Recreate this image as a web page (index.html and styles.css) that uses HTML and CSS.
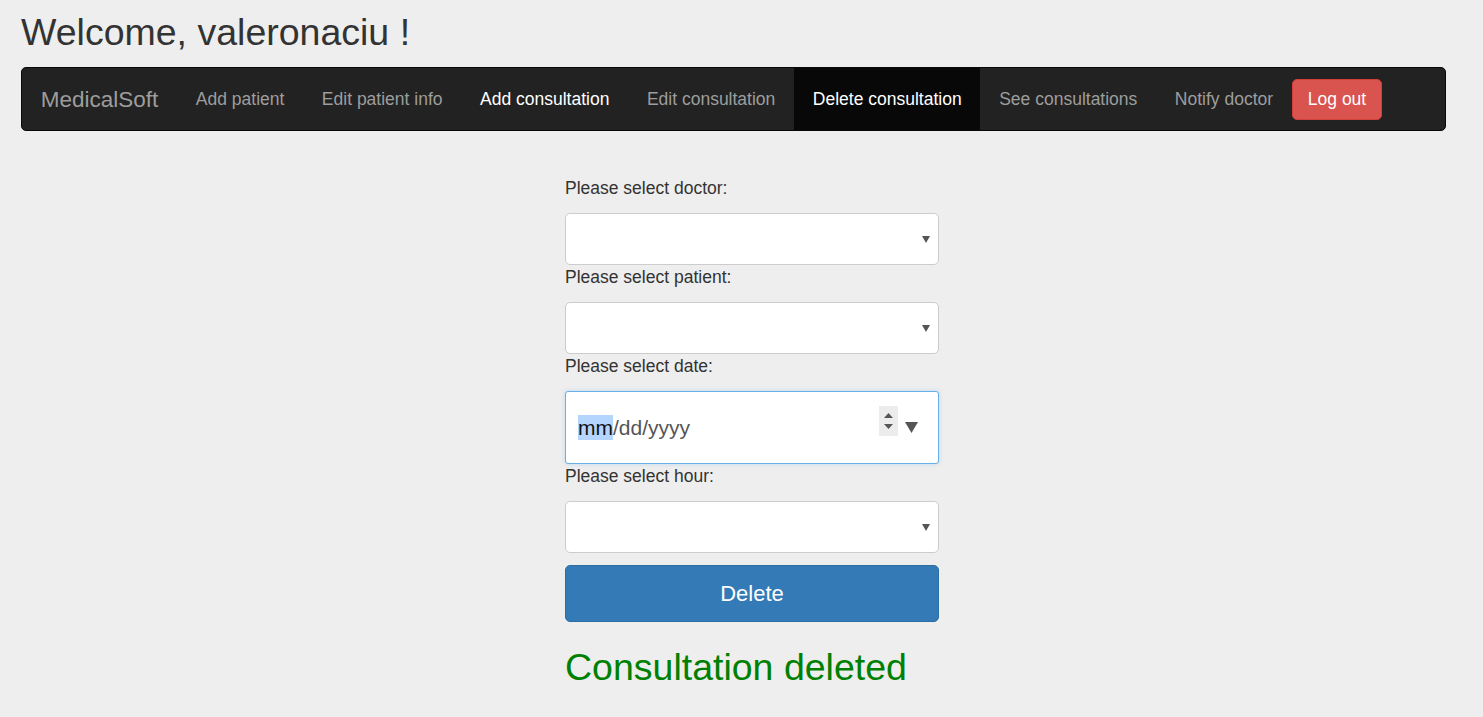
FILE: index.html
```html
<!DOCTYPE html>
<html>
<head>
<meta charset="utf-8">
<title>MedicalSoft</title>
<link rel="stylesheet" href="styles.css">
</head>
<body>
<div class="page">
  <h2 class="welcome">Welcome, valeronaciu !</h2>
  <nav class="navbar">
    <a class="brand" href="#">MedicalSoft</a>
    <ul class="nav">
      <li><a href="#">Add patient</a></li>
      <li><a href="#">Edit patient info</a></li>
      <li class="focus"><a href="#">Add consultation</a></li>
      <li><a href="#">Edit consultation</a></li>
      <li class="active"><a href="#">Delete consultation</a></li>
      <li><a href="#">See consultations</a></li>
      <li><a href="#">Notify doctor</a></li>
    </ul>
    <button class="btn-logout" type="button">Log out</button>
  </nav>
</div>

<form class="form">
  <label class="lbl">Please select doctor:</label>
  <div class="select-wrap">
    <select class="select"><option></option></select>
    <svg class="caret" width="8" height="7" viewBox="0 0 8 7"><path d="M0 0H8L4 7Z" fill="#555"/></svg>
  </div>

  <label class="lbl">Please select patient:</label>
  <div class="select-wrap">
    <select class="select"><option></option></select>
    <svg class="caret" width="8" height="7" viewBox="0 0 8 7"><path d="M0 0H8L4 7Z" fill="#555"/></svg>
  </div>

  <label class="lbl">Please select date:</label>
  <div class="date-input">
    <span class="seg-hl">mm</span><span class="seg">/dd/yyyy</span>
    <div class="spinner">
      <svg width="9" height="5" viewBox="0 0 9 5"><path d="M0 5H9L4.5 0Z" fill="#555"/></svg>
      <svg width="9" height="5" viewBox="0 0 9 5"><path d="M0 0H9L4.5 5Z" fill="#555"/></svg>
    </div>
    <svg class="drop" width="13" height="11" viewBox="0 0 13 11"><path d="M0 0H13L6.5 11Z" fill="#555"/></svg>
  </div>

  <label class="lbl">Please select hour:</label>
  <div class="select-wrap">
    <select class="select"><option></option></select>
    <svg class="caret" width="8" height="7" viewBox="0 0 8 7"><path d="M0 0H8L4 7Z" fill="#555"/></svg>
  </div>

  <button class="btn-delete" type="button">Delete</button>

  <h2 class="result">Consultation deleted</h2>
</form>
</body>
</html>
```
FILE: styles.css
```css
html, body {
  margin: 0;
  padding: 0;
}

body {
  background: #eeeeee;
  color: #333333;
  font-family: "Liberation Sans", Arial, sans-serif;
  font-size: 17.5px;
  line-height: 25px;
}

.page {
  padding: 0 37px 0 21px;
}

.welcome {
  margin: 12px 0 14px;
  font-size: 37.5px;
  font-weight: 400;
  line-height: 41px;
  color: #333333;
}

.navbar {
  display: flex;
  align-items: stretch;
  height: 64px;
  box-sizing: border-box;
  background: #222222;
  border: 1px solid #080808;
  border-radius: 5px;
}

.brand {
  display: flex;
  align-items: center;
  padding: 0 18.75px;
  font-size: 22.5px;
  color: #9d9d9d;
  text-decoration: none;
}

.nav {
  display: flex;
  margin: 0;
  padding: 0;
  list-style: none;
}

.nav li {
  display: flex;
}

.nav a {
  display: flex;
  align-items: center;
  padding: 0 18.75px;
  color: #9d9d9d;
  text-decoration: none;
  font-size: 17.5px;
}

.nav li.focus a {
  color: #ffffff;
}

.nav li.active {
  background: #080808;
}

.nav li.active a {
  color: #ffffff;
}

.btn-logout {
  align-self: center;
  height: 41px;
  padding: 0 15px;
  margin: 0;
  background: #d9534f;
  border: 1px solid #d43f3a;
  border-radius: 5px;
  color: #ffffff;
  font-family: inherit;
  font-size: 17.5px;
}

.form {
  width: 374px;
  margin: 45px 0 0 565px;
}

.lbl {
  display: block;
  margin-bottom: 12px;
  font-weight: 400;
  line-height: 25px;
}

.select-wrap {
  position: relative;
}

.select {
  display: block;
  width: 100%;
  height: 52px;
  box-sizing: border-box;
  margin: 0;
  background: #ffffff;
  border: 1px solid #cccccc;
  border-radius: 5px;
  -webkit-appearance: none;
  appearance: none;
  font-family: inherit;
  font-size: 17.5px;
}

.caret {
  position: absolute;
  right: 9px;
  top: 23px;
}

.date-input {
  display: flex;
  align-items: center;
  height: 73px;
  box-sizing: border-box;
  padding: 0 20px 0 12px;
  background: #ffffff;
  border: 1px solid #66afe9;
  border-radius: 3px;
  box-shadow: 0 0 4px rgba(102, 175, 233, 0.35);
  font-size: 21px;
  line-height: 25px;
}

.seg-hl {
  background: #b4d5fe;
  color: #111111;
}

.seg {
  color: #555555;
}

.spinner {
  display: flex;
  flex-direction: column;
  justify-content: center;
  align-items: center;
  gap: 6px;
  width: 19px;
  height: 30px;
  margin-left: auto;
  margin-right: 7px;
  margin-bottom: 14px;
  background: #ececec;
}

.spinner svg {
  display: block;
}

.drop {
  display: block;
  margin-top: 0;
}

.btn-delete {
  display: block;
  width: 100%;
  height: 57px;
  margin: 12px 0 0;
  background: #337ab7;
  border: 1px solid #2e6da4;
  border-radius: 5px;
  color: #ffffff;
  font-family: inherit;
  font-size: 22px;
}

.result {
  margin: 25px 0 0;
  font-size: 37.5px;
  font-weight: 400;
  line-height: 41px;
  color: #008000;
}
```
